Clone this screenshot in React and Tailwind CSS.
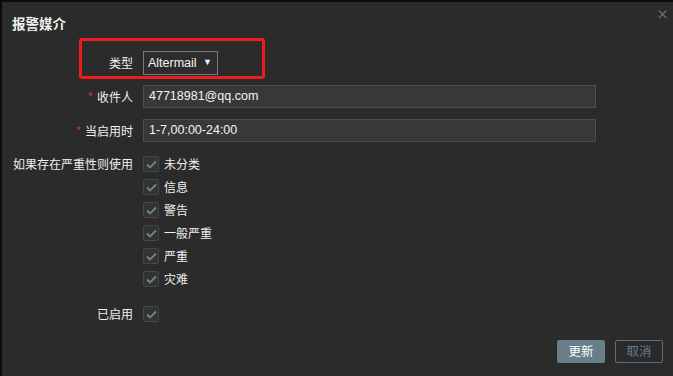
import React from "react";

const font = { fontFamily: '"Noto Sans CJK SC", "Liberation Sans", sans-serif' };

function Check() {
  return (
    <span className="flex h-[16px] w-[16px] items-center justify-center rounded-[2px] border border-[#464646] bg-[#333333]">
      <svg width="11" height="9" viewBox="0 0 11 9" fill="none">
        <path d="M1 4.5 L4 7.5 L10 1.5" stroke="#6c8694" strokeWidth="1.8" />
      </svg>
    </span>
  );
}

function Label({ children, req }) {
  return (
    <div className="w-[131px] shrink-0 text-right text-[12px] text-[#f0f0f0]">
      {req && <span className="mr-[4px] text-[#c0392b]">*</span>}
      {children}
    </div>
  );
}

export default function App() {
  const sev = ["未分类", "信息", "警告", "一般严重", "严重", "灾难"];
  return (
    <div className="h-[376px] w-[673px] bg-[#0c0c0c] pl-[2px] pt-[2px]" style={font}>
      <div className="relative h-[374px] w-[671px] bg-[#2b2b2b]">
        <div className="absolute right-[4px] top-[2px] text-[13px] font-bold text-[#6a6a6a]">×</div>
        <div className="pl-[10px] pt-[11px] text-[13.5px] font-bold leading-[20px] text-[#f0f0f0]">报警媒介</div>

        <div className="relative mt-[18px] flex h-[24px] items-center">
          <div className="absolute left-[77px] top-[-13px] h-[41px] w-[186px] rounded-[3px] border-[3px] border-[#ee1c1c]" />
          <Label>类型</Label>
          <div className="ml-[10px] flex h-[24px] w-[75px] items-center justify-between border border-[#6f7c84] bg-[#2d2d2d] pl-[4px] pr-[5px] text-[12.5px] text-[#f4f4f4]" style={{ fontFamily: '"Liberation Sans", sans-serif' }}>
            <span>Altermail</span>
            <span className="text-[9px]">▼</span>
          </div>
        </div>

        <div className="mt-[10px] flex h-[23px] items-center">
          <Label req>收件人</Label>
          <div className="ml-[10px] flex h-[23px] w-[453px] items-center border border-[#4d4d4d] bg-[#383838] pl-[5px] text-[12.5px] text-[#f4f4f4]" style={{ fontFamily: '"Liberation Sans", sans-serif' }}>
            47718981@qq.com
          </div>
        </div>

        <div className="mt-[11px] flex h-[23px] items-center">
          <Label req>当启用时</Label>
          <div className="ml-[10px] flex h-[23px] w-[453px] items-center border border-[#4d4d4d] bg-[#383838] pl-[5px] text-[12.5px] text-[#f4f4f4]" style={{ fontFamily: '"Liberation Sans", sans-serif' }}>
            1-7,00:00-24:00
          </div>
        </div>

        <div className="mt-[14px] flex">
          <div className="w-[131px] shrink-0 text-right text-[12px] leading-[16px] text-[#f0f0f0]">如果存在严重性则使用</div>
          <div className="ml-[10px] flex flex-col gap-[7px]">
            {sev.map((s) => (
              <div key={s} className="flex h-[16px] items-center gap-[5px] text-[12px] text-[#f0f0f0]">
                <Check />
                <span>{s}</span>
              </div>
            ))}
          </div>
        </div>

        <div className="mt-[19px] flex h-[16px] items-center">
          <Label>已启用</Label>
          <div className="ml-[10px]">
            <Check />
          </div>
        </div>

        <div className="mt-[18px] flex justify-end gap-[10px] pr-[10px]">
          <div className="flex h-[23px] w-[48px] items-center justify-center rounded-[2px] bg-[#687f8a] text-[12.5px] text-white">更新</div>
          <div className="flex h-[23px] w-[48px] items-center justify-center rounded-[2px] border border-[#56707c] text-[12.5px] text-[#5f7d8c]">取消</div>
        </div>
      </div>
    </div>
  );
}
